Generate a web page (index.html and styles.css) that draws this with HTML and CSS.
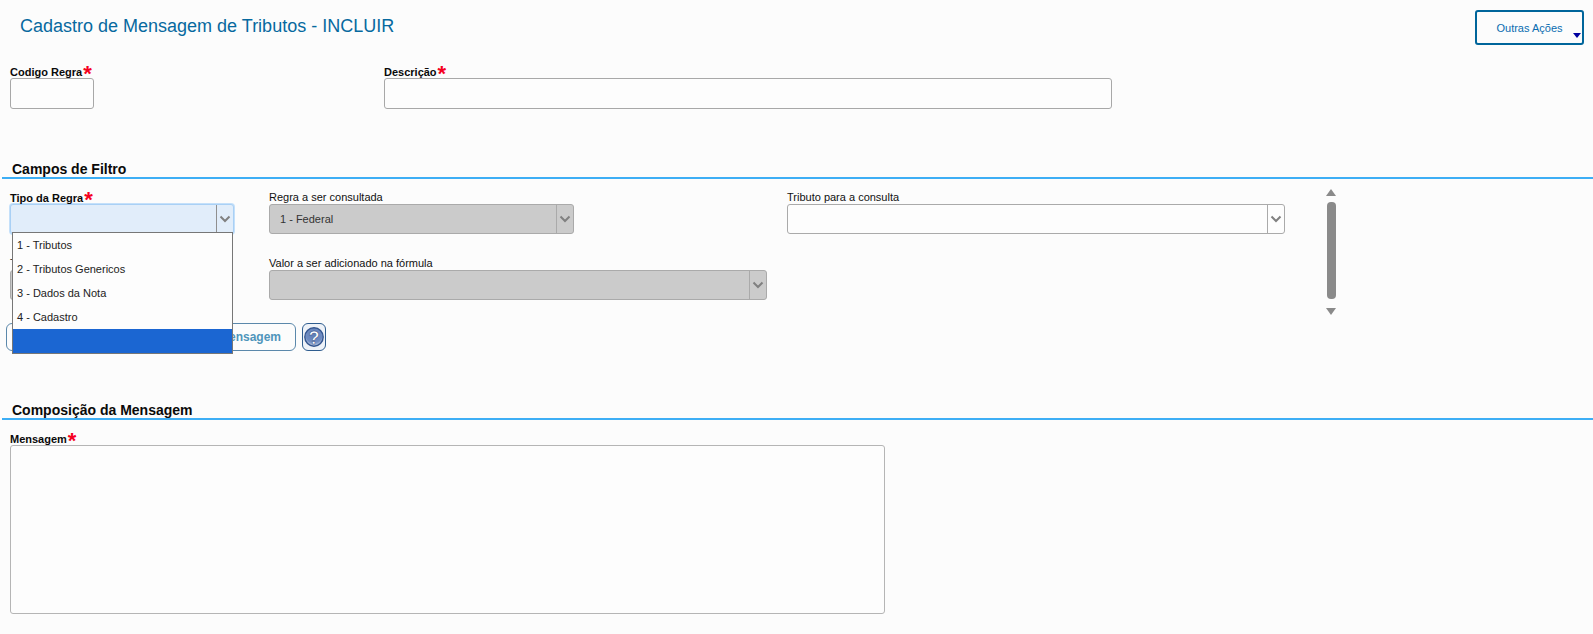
FILE: index.html
```html
<!DOCTYPE html>
<html lang="pt-BR">
<head>
<meta charset="utf-8">
<title>Cadastro de Mensagem de Tributos</title>
<link rel="stylesheet" href="styles.css">
</head>
<body>
<header class="top">
  <h1 class="title">Cadastro de Mensagem de Tributos - INCLUIR</h1>
  <button class="actions" type="button">Outras Ações<span class="caret"></span></button>
</header>

<section class="main-fields">
  <div class="field code">
    <label class="label strong">Codigo Regra<span class="req">*</span></label>
    <div class="input"></div>
  </div>
  <div class="field desc">
    <label class="label strong">Descrição<span class="req">*</span></label>
    <div class="input"></div>
  </div>
</section>

<h2 class="section filter-head">Campos de Filtro</h2>

<section class="filter">
  <div class="grid">
    <div class="field">
      <label class="label strong">Tipo da Regra<span class="req">*</span></label>
      <div class="select focus w224">
        <span class="value"></span>
        <span class="arrow"><svg width="12" height="8" viewBox="0 0 12 8"><path d="M1.5 1.5 6 6l4.5-4.5" fill="none" stroke="#808080" stroke-width="2"/></svg></span>
      </div>
      <ul class="menu">
        <li>1 - Tributos</li>
        <li>2 - Tributos Genericos</li>
        <li>3 - Dados da Nota</li>
        <li>4 - Cadastro</li>
        <li class="selected"></li>
      </ul>
    </div>
    <div class="field">
      <label class="label">Regra a ser consultada</label>
      <div class="select off w305">
        <span class="value">1 - Federal</span>
        <span class="arrow"><svg width="12" height="8" viewBox="0 0 12 8"><path d="M1.5 1.5 6 6l4.5-4.5" fill="none" stroke="#808080" stroke-width="2"/></svg></span>
      </div>
    </div>
    <div class="field">
      <label class="label">Tributo para a consulta</label>
      <div class="select w498">
        <span class="value"></span>
        <span class="arrow"><svg width="12" height="8" viewBox="0 0 12 8"><path d="M1.5 1.5 6 6l4.5-4.5" fill="none" stroke="#808080" stroke-width="2"/></svg></span>
      </div>
    </div>
    <div class="field">
      <label class="label">Tributo</label>
      <div class="select off w200"><span class="value"></span></div>
    </div>
    <div class="field">
      <label class="label">Valor a ser adicionado na fórmula</label>
      <div class="select off w498">
        <span class="value"></span>
        <span class="arrow"><svg width="12" height="8" viewBox="0 0 12 8"><path d="M1.5 1.5 6 6l4.5-4.5" fill="none" stroke="#808080" stroke-width="2"/></svg></span>
      </div>
    </div>
  </div>
  <div class="scrollbar">
    <span class="tri up"></span>
    <span class="thumb"></span>
    <span class="tri down"></span>
  </div>
</section>

<div class="buttons">
  <button class="add" type="button">Adicionar Mensagem</button>
  <button class="help" type="button" aria-label="Ajuda">
    <svg width="20" height="22" viewBox="0 0 20 22">
      <defs><radialGradient id="g" cx="50%" cy="35%" r="65%"><stop offset="0" stop-color="#5f7db6"/><stop offset="0.7" stop-color="#6f8cc2"/><stop offset="1" stop-color="#c3d0e6"/></radialGradient></defs>
      <circle cx="10" cy="11" r="9.2" fill="url(#g)" stroke="#34558f" stroke-width="1.4"/>
      <text x="10" y="17.5" text-anchor="middle" class="qmark">?</text>
    </svg>
  </button>
</div>

<h2 class="section compose-head">Composição da Mensagem</h2>

<section class="message">
  <label class="label strong">Mensagem<span class="req">*</span></label>
  <div class="textarea"></div>
</section>
</body>
</html>
```
FILE: styles.css
```css
* { box-sizing: border-box; }
html, body { margin: 0; padding: 0; }
body {
  background: #fcfcfc;
  font-family: "Liberation Sans", Arial, sans-serif;
  color: #111;
  height: 634px;
  overflow: hidden;
}
.top {
  display: flex;
  justify-content: space-between;
  padding: 10px 9px 0 20px;
  height: 45px;
}
.title {
  margin: 6px 0 0;
  font-size: 18px;
  line-height: 21px;
  font-weight: 400;
  color: #07699f;
}
.actions {
  position: relative;
  width: 109px;
  height: 35px;
  padding: 0;
  background: #fcfcfc;
  border: 2px solid #00659b;
  border-radius: 3px;
  color: #0a6cb0;
  font: 11px "Liberation Sans", Arial, sans-serif;
}
.caret {
  position: absolute;
  right: 1px;
  bottom: 5px;
  border: 4px solid transparent;
  border-top: 5px solid #0000a0;
  border-bottom: 0;
}
.main-fields {
  display: flex;
  padding: 19px 0 0 10px;
}
.field { position: relative; }
.code { width: 374px; }
.code .input { width: 84px; }
.desc .input { width: 728px; }
.label {
  display: block;
  height: 14px;
  font-size: 11px;
  line-height: 14px;
  white-space: nowrap;
}
.strong { padding-top: 1px; font-weight: 700; color: #0a0a0a; }
.req {
  display: inline-block;
  height: 14px;
  margin-left: 1px;
  color: #f5001e;
  font-size: 22px;
  line-height: 17px;
  font-weight: 700;
  vertical-align: top;
}
.input {
  height: 31px;
  background: #fdfdfd;
  border: 1px solid #a8a8a8;
  border-radius: 3px;
}
.section {
  margin: 0 0 0 2px;
  padding: 1px 0 0 10px;
  height: 19px;
  font-size: 14px;
  line-height: 17px;
  font-weight: 700;
  color: #0a0a0a;
  border-bottom: 2px solid #3daef5;
}
.filter-head { margin-top: 51px; }
.filter {
  position: relative;
  display: flex;
  height: 144px;
  padding: 10px 0 0 10px;
}
.grid {
  display: grid;
  grid-template-columns: 259px 518px 498px;
  grid-auto-rows: 66px;
  align-content: start;
  width: 1275px;
  padding-top: 1px;
}
.select {
  display: flex;
  height: 30px;
  border: 1px solid #aaa;
  border-radius: 3px;
  background: #fdfdfd;
}
.w200 { width: 200px; }
.w224 { width: 224px; }
.w305 { width: 305px; }
.w498 { width: 498px; }
.value {
  flex: 1;
  padding-left: 10px;
  font-size: 11px;
  line-height: 28px;
  color: #333;
}
.arrow {
  display: flex;
  align-items: center;
  justify-content: center;
  width: 17px;
  border-left: 1px solid #aaa;
}
.off { background: #cbcbcb; }
.focus {
  background: #e1edfa;
  border-color: #a9d0f5;
  box-shadow: 0 0 0 1px #c4e0fa;
}
.focus .arrow { border-left-color: #8f8f8f; }
.menu {
  position: absolute;
  top: 42px;
  left: 2px;
  z-index: 2;
  width: 221px;
  margin: 0;
  padding: 0;
  list-style: none;
  background: #fdfdfd;
  border: 1px solid #777;
}
.menu li {
  height: 24px;
  padding-left: 4px;
  font-size: 11px;
  line-height: 24px;
  color: #222;
}
.menu .selected { background: #1b66d2; }
.scrollbar {
  display: flex;
  flex-direction: column;
  align-items: center;
  width: 10px;
  margin: 0 0 0 41px;
}
.tri {
  width: 0;
  height: 0;
  border: 5px solid transparent;
}
.up { border-top: 0; border-bottom: 7px solid #8a8a8a; }
.down { border-bottom: 0; border-top: 7px solid #8a8a8a; }
.thumb {
  width: 9px;
  height: 97px;
  margin: 6px 0 9px;
  border-radius: 4px;
  background: #8a8a8a;
}
.buttons {
  display: flex;
  gap: 6px;
  padding-left: 6px;
}
.add {
  width: 290px;
  height: 28px;
  padding: 0 14px 0 0;
  text-align: right;
  background: #fcfcfc;
  border: 1px solid #5b88ab;
  border-radius: 6px;
  color: #4f95bb;
  font: 700 12px "Liberation Sans", Arial, sans-serif;
}
.help {
  display: flex;
  align-items: center;
  justify-content: center;
  width: 24px;
  height: 28px;
  padding: 0;
  background: #eef2f8;
  border: 1px solid #2f5d8f;
  border-radius: 6px;
}
.qmark {
  font: 700 18px "Liberation Sans", Arial, sans-serif;
  fill: #fff;
  stroke: #2f4c86;
  stroke-width: 0.5px;
}
.compose-head { margin-top: 50px; }
.message { padding: 11px 0 0 10px; }
.textarea {
  width: 875px;
  height: 169px;
  background: #fdfdfd;
  border: 1px solid #b5b5b5;
  border-radius: 3px;
}
```
